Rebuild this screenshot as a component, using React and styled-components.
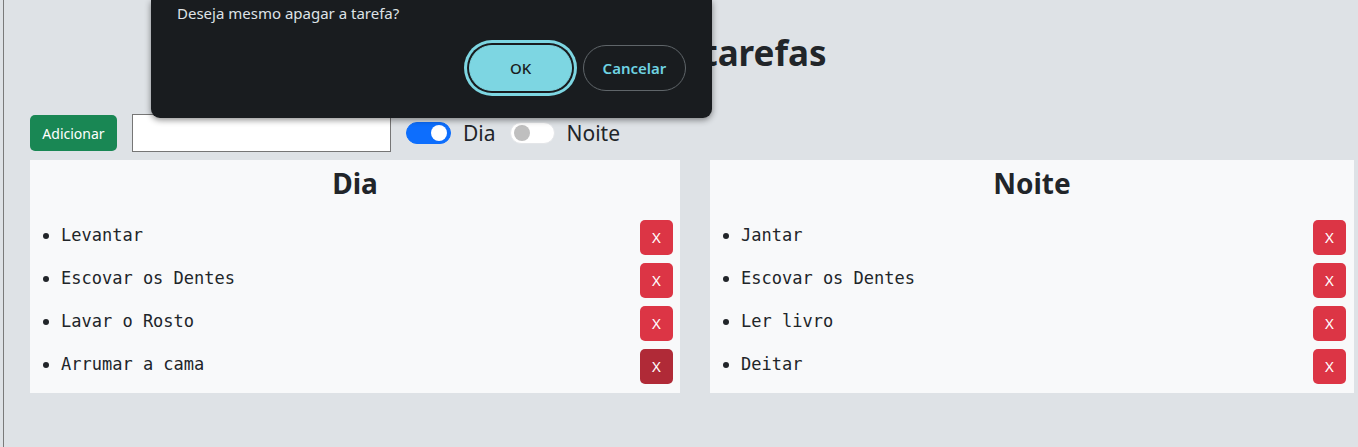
import React from "react";
import styled, { createGlobalStyle } from "styled-components";

const GlobalStyle = createGlobalStyle`
  body {
    margin: 0;
    background: #dee2e6;
    font-family: "Noto Sans", "Open Sans", sans-serif;
    color: #212529;
  }
`;

const dia = ["Levantar", "Escovar os Dentes", "Lavar o Rosto", "Arrumar a cama"];
const noite = ["Jantar", "Escovar os Dentes", "Ler livro", "Deitar"];

const Page = styled.div`
  position: relative;
  min-height: 447px;
  box-sizing: border-box;
  margin-left: 3px;
  border-left: 1px solid #7a7a7a;
  padding: 0 4px 0 26px;
  overflow: hidden;
`;

const Title = styled.h1`
  margin: 0;
  padding-top: 32px;
  height: 114px;
  box-sizing: border-box;
  text-align: center;
  font-size: 35px;
  font-weight: 700;
  line-height: 1.2;
`;

const Toolbar = styled.div`
  display: flex;
  align-items: center;
  height: 38px;
  margin-bottom: 8px;
`;

const AddButton = styled.button`
  height: 36px;
  width: 87px;
  padding: 0;
  border: none;
  border-radius: 5px;
  background: #198754;
  color: #fff;
  font-family: inherit;
  font-size: 14px;
  margin-right: 15px;
`;

const TaskInput = styled.input`
  width: 259px;
  height: 38px;
  box-sizing: border-box;
  border: 1px solid #767676;
  background: #fff;
  margin: 0 15px 0 0;
`;

const SwitchLabel = styled.label`
  display: flex;
  align-items: center;
  gap: 12px;
  font-size: 21px;
  margin-right: 14px;
`;

const Switch = styled.span`
  position: relative;
  width: 45px;
  height: 22px;
  box-sizing: border-box;
  border-radius: 11px;
  background: ${({ $on }) => ($on ? "#0d6efd" : "#fff")};
  border: 1px solid ${({ $on }) => ($on ? "#0d6efd" : "#e4e6e9")};

  &::after {
    content: "";
    position: absolute;
    top: 2px;
    ${({ $on }) => ($on ? "right: 3px;" : "left: 3px;")}
    width: 16px;
    height: 16px;
    border-radius: 50%;
    background: ${({ $on }) => ($on ? "#fff" : "#bfbfbf")};
  }
`;

const Columns = styled.div`
  display: grid;
  grid-template-columns: 650px 1fr;
  gap: 30px;
`;

const Panel = styled.section`
  background: #f8f9fa;
  padding: 7px 0 9px;
`;

const PanelTitle = styled.h3`
  margin: 0 0 19px;
  text-align: center;
  font-size: 28px;
  font-weight: 700;
  line-height: 1.2;
`;

const List = styled.ul`
  margin: 0;
  padding: 0 ${({ $right }) => $right}px 0 31px;
`;

const Item = styled.li`
  margin-bottom: 8px;
  &:last-child {
    margin-bottom: 0;
  }
`;

const Row = styled.div`
  display: flex;
  align-items: center;
  justify-content: space-between;
  height: 35px;
  font-family: "DejaVu Sans Mono", monospace;
  font-size: 17px;
  padding-bottom: 4px;
  box-sizing: border-box;
`;

const DeleteButton = styled.button`
  width: 33px;
  height: 35px;
  padding: 0;
  border: none;
  border-radius: 5px;
  background: ${({ $hover }) => ($hover ? "#b02a37" : "#dc3545")};
  color: #fff;
  font-family: "Noto Sans", sans-serif;
  font-size: 15px;
  margin-bottom: -4px;
`;

const Dialog = styled.div`
  position: absolute;
  top: 0;
  left: 147px;
  width: 561px;
  box-sizing: border-box;
  padding: 3px 26px 27px;
  background: #191c1f;
  border-radius: 0 0 9px 9px;
  box-shadow: 0 2px 6px rgba(0, 0, 0, 0.45);
  color: #dee2e6;
`;

const DialogText = styled.p`
  margin: 0 0 22px;
  font-size: 15px;
  line-height: 20px;
`;

const DialogActions = styled.div`
  display: flex;
  justify-content: flex-end;
  gap: 11px;
`;

const DialogButton = styled.button`
  width: 103px;
  height: 46px;
  border-radius: 23px;
  font-family: inherit;
  font-size: 15px;
  padding: 0;
  ${({ $primary }) =>
    $primary
      ? `
    background: #7dd6e2;
    border: 1px solid #7dd6e2;
    color: #1a1d20;
    font-weight: 500;
    box-shadow: 0 0 0 2px #191c1f, 0 0 0 5px #7dd6e2;
  `
      : `
    background: transparent;
    border: 1px solid #5f6569;
    color: #6fd3e2;
    font-weight: 600;
  `}
`;

const TaskList = ({ title, items, hoverIndex, right }) => (
  <Panel>
    <PanelTitle>{title}</PanelTitle>
    <List $right={right}>
      {items.map((t, i) => (
        <Item key={t}>
          <Row>
            <span>{t}</span>
            <DeleteButton $hover={i === hoverIndex}>X</DeleteButton>
          </Row>
        </Item>
      ))}
    </List>
  </Panel>
);

export default function App() {
  return (
    <>
      <GlobalStyle />
      <Page>
        <Title>Lista de tarefas</Title>
        <Toolbar>
          <AddButton>Adicionar</AddButton>
          <TaskInput type="text" />
          <SwitchLabel>
            <Switch $on />
            Dia
          </SwitchLabel>
          <SwitchLabel>
            <Switch />
            Noite
          </SwitchLabel>
        </Toolbar>
        <Columns>
          <TaskList title="Dia" items={dia} hoverIndex={3} right={7} />
          <TaskList title="Noite" items={noite} right={8} />
        </Columns>
        <Dialog>
          <DialogText>Deseja mesmo apagar a tarefa?</DialogText>
          <DialogActions>
            <DialogButton $primary>OK</DialogButton>
            <DialogButton>Cancelar</DialogButton>
          </DialogActions>
        </Dialog>
      </Page>
    </>
  );
}
